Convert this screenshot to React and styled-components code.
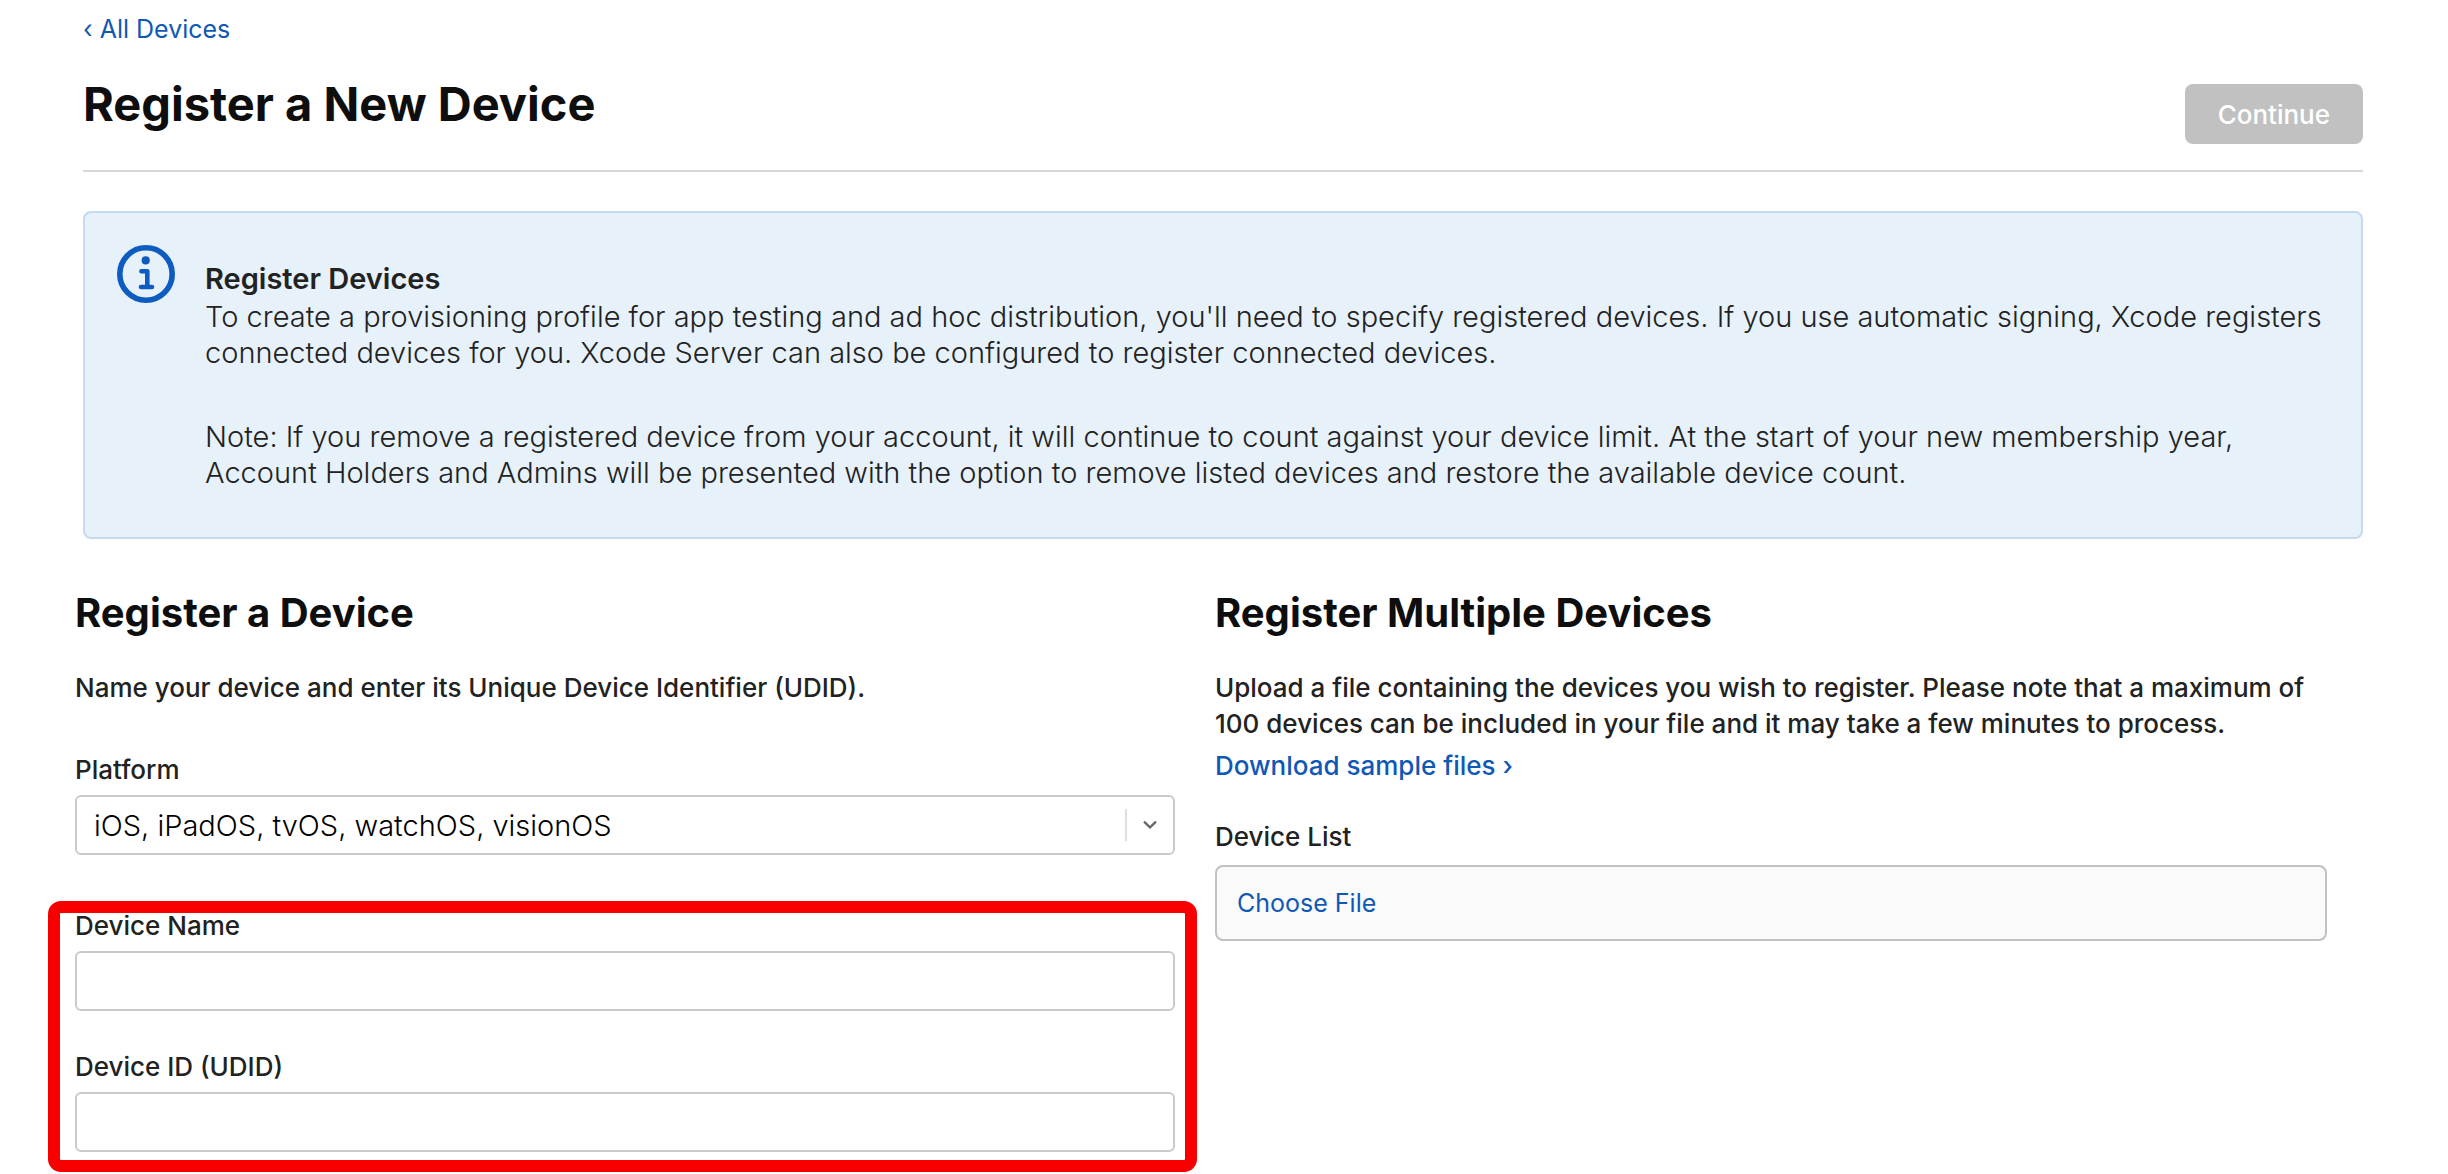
import * as React from 'react';
import styled, { createGlobalStyle } from 'styled-components';

function App() {
    return (
        <>
            <GlobalStyle />
            <Page>
                <Header>
                    <BackLink href="#devices">‹ All Devices</BackLink>
                    <TitleRow>
                        <Title>Register a New Device</Title>
                        <ContinueButton type="button" disabled>Continue</ContinueButton>
                    </TitleRow>
                </Header>
                <Banner>
                    <InfoIcon />
                    <BannerBody>
                        <BannerTitle>Register Devices</BannerTitle>
                        <BannerText>
                            To create a provisioning profile for app testing and ad hoc distribution, you'll need to specify
                            registered devices. If you use automatic signing, Xcode registers connected devices for you. Xcode
                            Server can also be configured to register connected devices.
                        </BannerText>
                        <BannerText>
                            Note: If you remove a registered device from your account, it will continue to count against your
                            device limit. At the start of your new membership year, Account Holders and Admins will be presented
                            with the option to remove listed devices and restore the available device count.
                        </BannerText>
                    </BannerBody>
                </Banner>
                <Columns>
                    <Column $gutter="40px">
                        <SectionTitle>Register a Device</SectionTitle>
                        <Description>Name your device and enter its Unique Device Identifier (UDID).</Description>
                        <PlatformField>
                            <Label htmlFor="platform">Platform</Label>
                            <SelectWrapper>
                                <Select id="platform" defaultValue="ios">
                                    <option value="ios">iOS, iPadOS, tvOS, watchOS, visionOS</option>
                                    <option value="macos">macOS</option>
                                </Select>
                                <SelectIndicator>
                                    <Chevron />
                                </SelectIndicator>
                            </SelectWrapper>
                        </PlatformField>
                        <Highlight>
                            <Field>
                                <Label htmlFor="device-name">Device Name</Label>
                                <TextInput id="device-name" type="text" />
                            </Field>
                            <Field>
                                <Label htmlFor="device-id">Device ID (UDID)</Label>
                                <TextInput id="device-id" type="text" />
                            </Field>
                        </Highlight>
                    </Column>
                    <Column $gutter="28px">
                        <SectionTitle>Register Multiple Devices</SectionTitle>
                        <Description>
                            Upload a file containing the devices you wish to register. Please note that a maximum of 100 devices
                            can be included in your file and it may take a few minutes to process.
                        </Description>
                        <SampleLink href="#samples">Download sample files ›</SampleLink>
                        <ListField>
                            <Label htmlFor="device-list">Device List</Label>
                            <FileBox>
                                <ChooseFile htmlFor="device-list">Choose File</ChooseFile>
                                <FileInput id="device-list" type="file" />
                            </FileBox>
                        </ListField>
                    </Column>
                </Columns>
            </Page>
        </>
    );
}

function InfoIcon() {
    return (
        <InfoSvg viewBox="0 0 58 58" fill="none" aria-hidden="true">
            <circle cx="29" cy="29" r="26.2" stroke="#0f5cc0" strokeWidth="5.6" />
            <circle cx="28.7" cy="15.4" r="4.1" fill="#0f5cc0" />
            <path d="M24.4 26.2H30.3V42M24 42H35" stroke="#0f5cc0" strokeWidth="4.6" strokeLinecap="round" strokeLinejoin="round" />
        </InfoSvg>
    );
}

function Chevron() {
    return (
        <svg width="14" height="10" viewBox="0 0 14 10" fill="none" aria-hidden="true">
            <path d="M1 1.6L7 7.4L13 1.6" stroke="#666" strokeWidth="2.2" />
        </svg>
    );
}

const GlobalStyle = createGlobalStyle`
  * {
    box-sizing: border-box;
  }
  body {
    margin: 0;
    background: #fff;
    color: #222;
    font-family: Inter, 'Liberation Sans', sans-serif;
  }
  input, select, button {
    font-family: inherit;
  }
`;

const Page = styled.main`
  min-height: 100vh;
  padding: 11px 85px 20px 83px;
  @media (max-width: 991px) {
    padding: 12px 20px;
  }
`;

const Header = styled.header`
  border-bottom: 2px solid #d6d6d6;
`;

const BackLink = styled.a`
  display: inline-block;
  color: #1058b6;
  font-size: 25px;
  line-height: 36px;
  text-decoration: none;
`;

const TitleRow = styled.div`
  display: flex;
  align-items: flex-start;
  justify-content: space-between;
  padding: 27px 0 26px;
`;

const Title = styled.h1`
  margin: 0;
  color: #0e0e0e;
  font-size: 47px;
  font-weight: 700;
  line-height: 60px;
`;

const ContinueButton = styled.button`
  height: 60px;
  margin-top: 10px;
  padding: 0 33px;
  border: 0;
  border-radius: 8px;
  background: #c1c1c1;
  color: #fff;
  font-size: 26px;
  font-weight: 500;
`;

const Banner = styled.section`
  display: flex;
  align-items: flex-start;
  gap: 30px;
  margin-top: 39px;
  padding: 32px 32px 46px;
  border: 2px solid #c5daee;
  border-radius: 8px;
  background: #e6f1fa;
`;

const InfoSvg = styled.svg`
  flex: none;
  width: 58px;
  height: 58px;
`;

const BannerBody = styled.div`
  padding-top: 13px;
`;

const BannerTitle = styled.h3`
  margin: 0;
  font-size: 29px;
  font-weight: 600;
  line-height: 41px;
`;

const BannerText = styled.p`
  margin: 0;
  font-size: 29px;
  font-weight: 300;
  line-height: 36px;
  & + & {
    margin-top: 48px;
  }
`;

const Columns = styled.div`
  display: grid;
  grid-template-columns: 1fr 1fr;
  margin: 48px 8px 0 -8px;
  @media (max-width: 991px) {
    grid-template-columns: 1fr;
  }
`;

const Column = styled.section`
  padding-right: ${(props) => props.$gutter};
`;

const SectionTitle = styled.h2`
  margin: 0;
  color: #0e0e0e;
  font-size: 40px;
  font-weight: 700;
  line-height: 52px;
`;

const Description = styled.p`
  margin: 31px 0 0;
  font-size: 26px;
  font-weight: 500;
  line-height: 36px;
`;

const Field = styled.div`
  display: flex;
  flex-direction: column;
  gap: 7px;
`;

const PlatformField = styled(Field)`
  margin-top: 46px;
`;

const ListField = styled(Field)`
  margin-top: 35px;
  gap: 10px;
`;

const Label = styled.label`
  font-size: 26px;
  font-weight: 500;
  line-height: 36px;
`;

const TextInput = styled.input`
  width: 100%;
  height: 60px;
  padding: 0 17px;
  border: 2px solid #cacaca;
  border-radius: 6px;
  background: #fff;
  color: #000;
  font-size: 29px;
  font-weight: 300;
`;

const SelectWrapper = styled.div`
  position: relative;
`;

const Select = styled(TextInput).attrs({ as: 'select' })`
  display: block;
  appearance: none;
`;

/* sits over the right end of the select */
const SelectIndicator = styled.span`
  position: absolute;
  top: 14px;
  right: 2px;
  display: flex;
  align-items: center;
  justify-content: center;
  width: 48px;
  height: 32px;
  border-left: 2px solid #dedede;
  pointer-events: none;
`;

const Highlight = styled.div`
  position: relative;
  display: flex;
  flex-direction: column;
  gap: 38px;
  margin-top: 53px;
  &::after {
    content: '';
    position: absolute;
    inset: -7px -22px -20px -27px;
    border: 12px solid #f80000;
    border-radius: 13px;
    pointer-events: none;
  }
`;

const SampleLink = styled.a`
  display: inline-block;
  margin-top: 6px;
  color: #1058b6;
  font-size: 26px;
  font-weight: 500;
  line-height: 36px;
  text-decoration: none;
`;

const FileBox = styled.div`
  position: relative;
  display: flex;
  align-items: center;
  height: 76px;
  padding: 0 20px;
  border: 2px solid #c1c1c1;
  border-radius: 8px;
  background: #fafafa;
`;

const ChooseFile = styled.label`
  color: #1058b6;
  font-size: 25px;
  line-height: 36px;
  cursor: pointer;
`;

/* the native control stays focusable behind its text */
const FileInput = styled.input`
  position: absolute;
  width: 1px;
  height: 1px;
  opacity: 0;
`;

export default App;
